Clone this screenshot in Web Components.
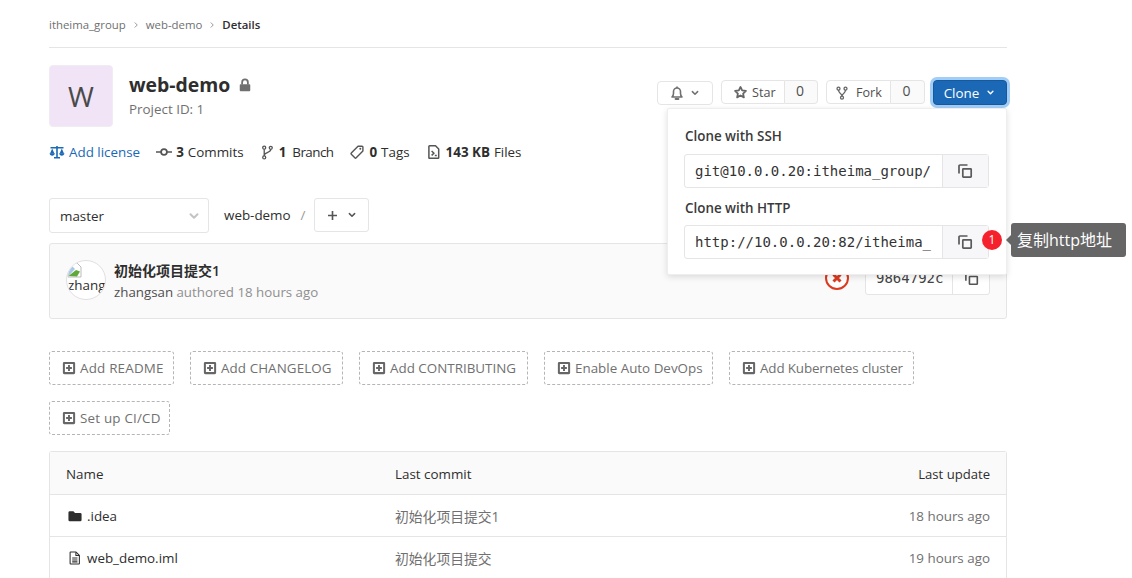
<!DOCTYPE html>
<html><head><meta charset="utf-8"><title>web-demo</title>
<style>
html,body{margin:0;padding:0;background:#fff;height:578px;overflow:hidden}
body{font-family:"Open Sans","Noto Sans CJK SC",sans-serif;color:#2e2e2e;font-size:13.4px}
</style></head><body>
<x-page>
  <x-crumbs></x-crumbs>
  <x-project></x-project>
  <x-stats></x-stats>
  <x-tree-bar></x-tree-bar>
  <x-commit></x-commit>
  <x-actions>
    <x-dash style="width:125px;letter-spacing:.2px">Add README</x-dash><x-dash style="width:153px;letter-spacing:.08px">Add CHANGELOG</x-dash><x-dash style="width:169px">Add CONTRIBUTING</x-dash><x-dash style="width:169px">Enable Auto DevOps</x-dash><x-dash style="width:185px;letter-spacing:-.14px">Add Kubernetes cluster</x-dash><x-dash style="width:121px;letter-spacing:.2px">Set up CI/CD</x-dash>
  </x-actions>
  <x-files></x-files>
</x-page>
<script>
const I={
 chev:'<path d="M4.5 6.2 8 9.7l3.5-3.5" fill="none" stroke="currentColor" stroke-width="2" stroke-linecap="round" stroke-linejoin="round"/>',
 crumb:'<path d="M6 4l4 4-4 4" fill="none" stroke="currentColor" stroke-width="1.4"/>',
 bell:'<path d="M3 12h10c-1-1-1.5-2-1.5-3.5V6.5a3.5 3.5 0 0 0-7 0v2C4.500 10 4 11 3 12z" fill="none" stroke="currentColor" stroke-width="1.6" stroke-linejoin="round"/><path d="M6.500 14h3" stroke="currentColor" stroke-width="1.800" stroke-linecap="round"/><path d="M8 1.500v1.500" stroke="currentColor" stroke-width="1.600"/>',
 star:'<path d="M8 2.100l1.750 3.750 4.050.5-3 2.800.800 4.050L8 11.200l-3.600 2 .8-4.050-3-2.800 4.050-.5z" fill="none" stroke="currentColor" stroke-width="1.900" stroke-linejoin="round"/>',
 fork:'<g fill="none" stroke="currentColor" stroke-width="1.500"><circle cx="4" cy="3" r="1.700"/><circle cx="12" cy="3" r="1.700"/><circle cx="8" cy="13.300" r="1.700"/><path d="M4 4.700c0 4 4 3.500 4 6.900M12 4.700c0 4-4 3.500-4 6.900"/></g>',
 branch:'<g fill="none" stroke="currentColor" stroke-width="1.400"><circle cx="4.500" cy="2.800" r="1.600"/><circle cx="11.500" cy="3" r="1.600"/><circle cx="4.500" cy="13.200" r="1.600"/><path d="M4.500 4.400v7.200M11.500 4.600c0 4-7 3-7 6.500"/></g>',
 copy:'<g fill="none" stroke="currentColor" stroke-width="1.700"><rect x="5.800" y="5.800" width="8.400" height="8.400" rx=".6"/><path d="M10.500 2H3a1 1 0 0 0-1 1v7.500"/></g>',
 lock:'<path d="M3 7h10a1 1 0 0 1 1 1v6a1 1 0 0 1-1 1H3a1 1 0 0 1-1-1V8a1 1 0 0 1 1-1z" fill="currentColor"/><path d="M4.700 7.500V5a3.300 3.300 0 0 1 6.600 0v2.500" fill="none" stroke="currentColor" stroke-width="2"/>',
 law:'<g fill="currentColor"><path d="M7.200 2h1.600v11H11v1.500H5V13h2.200z"/><path d="M1.500 3h13v1.500h-13z"/><path d="M3.200 4.500 1 9.500h4.400zM12.800 4.500 10.600 9.500H15z"/><path d="M.6 9.300h5.200c0 1.600-1.200 2.400-2.600 2.400S.6 10.900.6 9.300zM10.200 9.300h5.200c0 1.600-1.200 2.400-2.600 2.400s-2.600-.8-2.600-2.400z"/></g>',
 commit:'<g fill="none" stroke="currentColor" stroke-width="1.700"><circle cx="8" cy="8" r="2.900"/><path d="M0 8h5M11 8h5"/></g>',
 tag:'<g fill="none" stroke="currentColor" stroke-width="1.400" stroke-linejoin="round"><path d="M9 2.200h4a.9.900 0 0 1 .9.900v4L7.200 13.800a1 1 0 0 1-1.400 0L2.300 10.300a1 1 0 0 1 0-1.400z"/></g><circle cx="11.300" cy="4.800" r="1" fill="currentColor"/>',
 files:'<g fill="none" stroke="currentColor" stroke-width="1.500" stroke-linejoin="round"><path d="M3.500 1.800h6l3.200 3.200v8.700a.6.600 0 0 1-.6.600H3.500a.6.600 0 0 1-.6-.6V2.400a.6.600 0 0 1 .6-.6z"/><path d="M5.600 7l2.400 2.200-2.400 2.200M8.800 11.500h2"/></g>',
 plusbox:'<path d="M2.500 1h11A1.500 1.500 0 0 1 15 2.500v11a1.500 1.500 0 0 1-1.500 1.500h-11A1.500 1.500 0 0 1 1 13.500v-11A1.500 1.500 0 0 1 2.500 1zm.8 2.300v9.400h9.400V3.300zM6.900 4.700h2.200v2.200h2.200v2.200H9.100v2.200H6.900V9.100H4.700V6.900h2.200z" fill="currentColor" fill-rule="evenodd"/>',
 folder:'<path d="M2 2.500h4.200l1.800 2h6a1.500 1.500 0 0 1 1.500 1.500v6.500a1.500 1.500 0 0 1-1.500 1.500H2A1.500 1.500 0 0 1 .5 12.500V4A1.500 1.500 0 0 1 2 2.500z" fill="currentColor"/>',
 doc:'<g fill="none" stroke="currentColor" stroke-width="1.200" stroke-linejoin="round"><path d="M3 1.200h6.200L13 5v9.200a.6.600 0 0 1-.6.600H3a.6.600 0 0 1-.6-.6V1.800a.6.600 0 0 1 .6-.6z"/><path d="M9 1.300v3.900h3.900M4.800 8h6M4.800 10.200h6M4.800 12.400h6"/></g>',
 plus:'<path d="M8 2.500v11M2.500 8h11" stroke="currentColor" stroke-width="2" fill="none"/>'
};
const svg=(n,s=16,extra='')=>`<svg width="${s}" height="${s}" viewBox="0 0 16 16" style="display:block;flex:none;${extra}">${I[n]}</svg>`;
const def=(name,css,html)=>customElements.define(name,class extends HTMLElement{constructor(){super();this.attachShadow({mode:'open'}).innerHTML=`<style>${css}</style>${typeof html==='function'?html(this):html}`}});

def('x-page',':host{display:block;width:958px;margin-left:49px;position:relative}','<slot></slot>');

def('x-crumbs',`:host{display:flex;align-items:center;height:45px;padding-top:2px;border-bottom:1px solid #e5e5e5;font-size:11.4px;color:#707070}
b{font-weight:600;color:#2e2e2e}svg{margin:0 5px;color:#8a8a8a}`,
`<span>itheima_group</span>${svg('crumb',10)}<span>web-demo</span>${svg('crumb',10)}<b>Details</b>`);

def('x-project',`:host{display:flex;padding-top:17px;height:64px;position:relative}
.av{width:64px;height:62px;border-radius:4px;background:#f1e4f6;border:1px solid #f0ecf2;box-sizing:border-box;display:flex;align-items:center;justify-content:center;font-size:28px;color:#4a4a4a;margin-right:16px}
.t{display:flex;flex-direction:column}
h1{margin:0;font-size:19.4px;font-weight:700;line-height:26px;padding-top:7px;display:flex;align-items:center;gap:8px;color:#2e2e2e}
h1 svg{color:#707070}
.id{font-size:13.4px;color:#707070;line-height:20px;margin-top:1px}
x-repo-actions{position:absolute;right:0;top:32px}`,
`<div class="av">W</div><div class="t"><h1>web-demo ${svg('lock',14)}</h1><div class="id">Project ID: 1</div></div><x-repo-actions></x-repo-actions>`);

def('x-repo-actions',`:host{display:flex;align-items:flex-start;gap:8px;color:#4f4f4f;font-size:12.6px}
.b{height:24px;box-sizing:border-box;border:1px solid #e5e5e5;border-radius:4px;display:flex;align-items:center;background:#fff;color:#4f4f4f}
.bell{margin-top:1px;width:56px;justify-content:center;gap:4px;color:#707070}
.g{display:flex}.g .l{gap:4px;border-radius:4px 0 0 4px;padding-top:1px}
.g .l svg{color:#666}
.g .r{border-left:0;border-radius:0 4px 4px 0;justify-content:center;background:#fafafa;font-size:14px;padding:0 2px 3px 0}
.star{width:64px;padding-left:11px}.fork{width:65px;padding-left:8px;gap:7px!important}
.w33{width:33px}.w34{width:34px}
.clone{width:74px;height:25px;box-sizing:border-box;background:#1b69b6;color:#fff;border:1px solid #17599c;border-radius:4px;display:flex;align-items:center;justify-content:center;gap:6px;box-shadow:0 0 0 3px #a2cdf7;font-size:13.4px}
x-clone-panel{position:absolute;right:0;top:28px}`,
`<div class="b bell">${svg('bell',16)}${svg('chev',12)}</div>
<div class="g"><div class="b l star">${svg('star',15)}Star</div><div class="b r w33">0</div></div>
<div class="g"><div class="b l fork">${svg('fork',14)}Fork</div><div class="b r w34">0</div></div>
<div class="clone">Clone ${svg('chev',11)}</div><x-clone-panel></x-clone-panel>`);

def('x-clone-panel',`:host{display:block;width:340px;height:167px;box-sizing:border-box;background:#fff;border:1px solid #eee;border-radius:2px;box-shadow:0 2px 6px rgba(0,0,0,.13);padding:17px 16px 0;color:#2e2e2e;z-index:5}
h4{margin:0 0 8px 1px;font-size:13.4px;font-weight:600;line-height:20px;color:#3a3a3a}
h4.second{padding-top:1px;margin-bottom:7px}
.f{display:flex;height:34px;border:1px solid #e5e5e5;border-radius:3px;box-sizing:border-box;margin-bottom:9px;width:305px}
.i{width:257px;flex:none;font:14px/32px "DejaVu Sans Mono","Liberation Mono",monospace;padding-left:10px;box-sizing:border-box;white-space:nowrap;overflow:hidden;color:#333}
.c{flex:1;background:#f7f7f9;border-left:1px solid #e5e5e5;display:flex;align-items:center;justify-content:center;color:#5a5a5a;padding-right:1px}
.w{position:relative}
.bd{position:absolute;left:298px;top:5px;width:20px;height:20px;border-radius:50%;background:#f5222d;color:#fff;font:12px/20px "Open Sans",sans-serif;text-align:center}
.tip{position:absolute;left:327px;top:-2px;width:115px;height:34px;background:#666;color:#fff;border-radius:3px;font-size:16px;line-height:34px;padding-left:6px;box-sizing:border-box;white-space:nowrap;font-family:"Open Sans","Noto Sans CJK SC",sans-serif}
.tip:before{content:"";position:absolute;left:-5px;top:12px;border:5px solid transparent;border-left:0;border-right-color:#666}`,
`<h4>Clone with SSH</h4><div class="f"><div class="i">git@10.0.0.20:itheima_group/</div><div class="c">${svg('copy',16)}</div></div>
<h4 class="second">Clone with HTTP</h4><div class="w"><div class="f"><div class="i">http://10.0.0.20:82/itheima_</div><div class="c">${svg('copy',16)}</div></div><div class="bd">1</div><div class="tip">复制http地址</div></div>`);

def('x-stats',`:host{display:flex;align-items:center;height:20px;margin-top:13px;font-size:13.4px;color:#2e2e2e;gap:16px;white-space:nowrap}
span{display:flex;align-items:center;gap:4px}svg{color:#555}b{font-weight:700}
.a{color:#1b69b6}.a svg{color:#1b69b6}i{font-style:normal;letter-spacing:-.55px;margin-left:2px}`,
`<span class="a">${svg('law',16)}Add license</span><span>${svg('commit',16)}<b>3</b> Commits</span><span>${svg('branch',15)}<b>1</b> <i>Branch</i></span><span>${svg('tag',16)}<b>0</b> Tags</span><span>${svg('files',16)}<b>143 KB</b> Files</span>`);

def('x-tree-bar',`:host{display:flex;align-items:flex-start;margin-top:36px;height:35px;color:#2e2e2e}
.s{width:160px;height:35px;box-sizing:border-box;border:1px solid #e5e5e5;border-radius:3px;display:flex;align-items:center;justify-content:space-between;padding:0 6px 0 10px}
.s svg{color:#c4c4c4}.n{margin-left:15px;line-height:34px}.sl{margin:0 9px 0 10px;color:#999;line-height:34px}
.p{width:55px;height:34px;box-sizing:border-box;border:1px solid #e5e5e5;border-radius:3px;display:flex;align-items:center;justify-content:center;gap:7px;color:#555}`,
`<div class="s">master${svg('chev',16)}</div><span class="n">web-demo</span><span class="sl">/</span><div class="p">${svg('plus',13)}${svg('chev',12)}</div>`);

def('x-commit',`:host{display:flex;align-items:center;height:76px;box-sizing:border-box;margin-top:10px;background:#fafafa;border:1px solid #e5e5e5;border-radius:3px;padding:0 16px;position:relative}
.av{width:40px;height:40px;border-radius:50%;overflow:hidden;border:1px solid #e0e0e0;box-sizing:border-box;background:#fff;margin:0 8px 2px 0;flex:none;font-size:13.4px;line-height:15px;color:#2e2e2e}
.av svg{display:block;margin:1px 0 0 0}
.x{padding-top:1px}
.t{font-weight:600;line-height:20px;font-size:14px}.m{line-height:20px;margin-top:1px;color:#8f8f8f;font-size:13.3px}.m i{font-style:normal;color:#4f4f4f}
.e{margin-left:auto;display:flex;align-items:center;margin-bottom:6px}
.st{width:24px;height:24px;margin-right:16px}
.sha{display:flex;height:34px;border:1px solid #e5e5e5;border-radius:3px;background:#fff;box-sizing:border-box;width:125px}
.sha .h{flex:1;font:14px/32px "DejaVu Sans Mono",monospace;overflow:hidden;color:#444;padding-left:10px;white-space:nowrap;min-width:0}
.sha .c{width:36px;flex:none;border-left:1px solid #e5e5e5;display:flex;align-items:center;justify-content:center;color:#555}`,
`<div class="av"><svg width="16" height="16" viewBox="0 0 16 16"><path d="M1 1h9l4 4v10H1z" fill="#fff" stroke="#bbb"/><path d="M1.500 8 5 4l3 3 -6.500 7z" fill="#a9c7e8"/><path d="M1.500 14 9 8l4 1.500-3 5z" fill="#5fa83a"/></svg><div style="white-space:nowrap;margin-left:1px">zhang</div></div>
<div class="x"><div class="t">初始化项目提交1</div><div class="m"><i>zhangsan</i> authored 18 hours ago</div></div>
<div class="e"><svg class="st" viewBox="0 0 24 24"><circle cx="12" cy="12" r="11" fill="#fff" stroke="#db3b21" stroke-width="2"/><path d="M8.500 8.500l7 7M15.500 8.500l-7 7" stroke="#db3b21" stroke-width="3"/></svg><div class="sha"><div class="h">9864792c</div><div class="c">${svg('copy',15)}</div></div></div>`);

def('x-actions',`:host{display:flex;flex-wrap:wrap;gap:16px 16px;margin-top:32px}`,'<slot></slot>');
def('x-dash',`:host{display:inline-flex;align-items:center;height:34px;box-sizing:border-box;border:1px dashed #b5b5b5;border-radius:3px;padding:0 0 0 12px;gap:4px;color:#707070;font-size:13.4px;white-space:nowrap}svg{color:#666}`,
()=>`${svg('plusbox',14)}<slot></slot>`);

def('x-files',`:host{display:block;margin-top:16px;border:1px solid #e5e5e5;border-bottom:0;border-radius:3px 3px 0 0;font-size:13.4px}
.r{display:grid;grid-template-columns:329px 1fr auto;align-items:center;height:42px;box-sizing:border-box;padding:0 16px;border-top:1px solid #e5e5e5}
.r.h{background:#fafafa;border-top:0;padding-top:2px}
.n{display:flex;align-items:center;gap:5px;padding-left:2px}.h .n{padding-left:0}
.c{color:#707070;font-size:13.8px}.h .c{font-size:13.4px}.h .c,.h .d{color:#2e2e2e}.d{color:#707070;font-size:13.4px}.h .d{font-size:13.1px}`,
`<div class="r h"><div class="n">Name</div><div class="c">Last commit</div><div class="d">Last update</div></div>
<div class="r"><div class="n">${svg('folder',14)}.idea</div><div class="c">初始化项目提交1</div><div class="d">18 hours ago</div></div>
<div class="r"><div class="n">${svg('doc',14)}web_demo.iml</div><div class="c">初始化项目提交</div><div class="d">19 hours ago</div></div>`);
</script>
</body></html>
